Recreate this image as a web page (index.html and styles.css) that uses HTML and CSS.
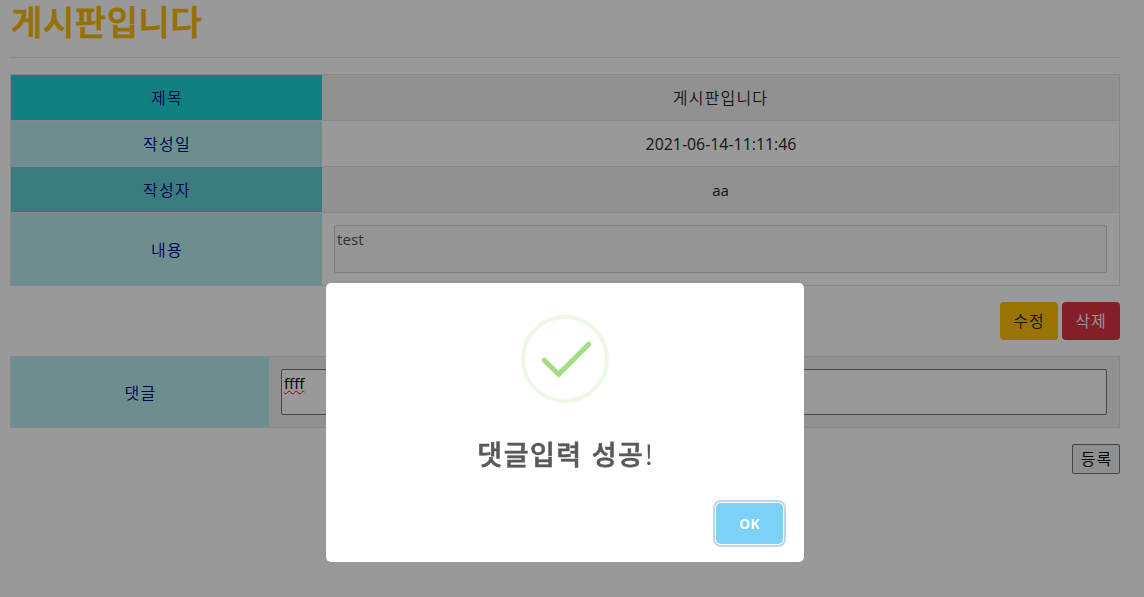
FILE: index.html
```html
<!DOCTYPE html>
<html lang="ko">
<head>
<meta charset="utf-8">
<title>게시판입니다</title>
<link rel="stylesheet" href="styles.css">
</head>
<body>
<main class="container">
  <h1 class="page-title">게시판입니다</h1>
  <table class="table post">
    <tr class="striped"><th class="head-title">제목</th><td>게시판입니다</td></tr>
    <tr><th class="head-light">작성일</th><td class="date">2021-06-14-11:11:46</td></tr>
    <tr class="striped"><th class="head-writer">작성자</th><td class="latin">aa</td></tr>
    <tr class="content-row"><th class="head-light">내용</th><td><div class="field readonly">test</div></td></tr>
  </table>
  <div class="actions">
    <button class="btn btn-warning">수정</button>
    <button class="btn btn-danger">삭제</button>
  </div>
  <table class="table comment">
    <tr class="striped"><th class="head-light">댓글</th><td><div class="field"><span class="misspelled">ffff</span></div></td></tr>
  </table>
  <div class="submit-row"><button class="submit">등록</button></div>
</main>
<div class="overlay">
  <div class="modal" role="dialog">
    <svg class="success" viewBox="0 0 88 88" width="88" height="88">
      <circle cx="44" cy="44" r="42" fill="none" stroke="#edf8e7" stroke-width="4"/>
      <path d="M23.2 45.2L37.6 59.3L67.8 29.2" fill="none" stroke="#a5dc86" stroke-width="5" stroke-linecap="round"/>
    </svg>
    <div class="modal-title">댓글입력 성공<span class="mark">!</span></div>
    <div class="modal-footer"><button class="ok">OK</button></div>
  </div>
</div>
</body>
</html>
```
FILE: styles.css
```css
* { box-sizing: border-box; }
body {
  margin: 0;
  background: #fff;
  color: #212529;
  font: 350 16px/22px "Open Sans", "Noto Sans CJK KR", sans-serif;
  overflow: hidden;
}
button { font-family: inherit; margin: 0; }
.container { width: 1110px; margin-left: 10px; }
.page-title {
  height: 58px;
  margin: 0 0 16px;
  padding-left: 1px;
  border-bottom: 1px solid #e5e5e5;
  color: #f8bc00;
  font-size: 34px;
  font-weight: 500;
  line-height: 45px;
  letter-spacing: .6px;
  -webkit-text-stroke: .8px #f8bc00;
}
.table {
  width: 100%;
  table-layout: fixed;
  border-collapse: separate;
  border-spacing: 0;
  border: solid #dee2e6;
  border-width: 0 1px 1px;
  margin: 0;
}
.table th, .table td {
  height: 46px;
  padding: 0 12px;
  border-top: 1px solid #dee2e6;
  text-align: center;
  vertical-align: middle;
  font-weight: 350;
  letter-spacing: 1.2px;
}
.table th { color: #000080; width: 311px; padding-left: 13px; }
.striped { background: #f2f2f2; }
.head-title { background: #1cd5d5; }
.head-light { background: #b4edee; }
.head-writer { background: #61cdd5; }
.table .date, .table .latin { letter-spacing: 0; font-weight: 400; }
.table .date { font-size: 15.9px; padding-left: 13px; }
.table .latin { font-size: 15px; }
.table .content-row th, .table .content-row td { height: 73px; }
.table .content-row th, .comment th { padding-top: 2px; }
.field {
  height: 48px;
  padding: 2px 2px;
  border: 1px solid #767676;
  border-radius: 2px;
  background: #fff;
  color: #000;
  font-size: 15.2px;
  font-weight: 400;
  line-height: 22px;
  letter-spacing: 0;
  text-align: left;
}
.readonly { background: #f8f8f8; border-color: #cfcfcf; color: #545454; }
.misspelled { text-decoration: underline wavy #f00 1px; text-underline-offset: 1px; }
.actions { display: flex; justify-content: flex-end; gap: 4px; padding: 16px 0; }
.btn {
  width: 58px;
  height: 38px;
  padding: 0 0 2px;
  border: 0;
  border-radius: 4px;
  font-size: 16px;
  font-weight: 350;
  letter-spacing: 1px;
}
.btn-warning { background: #ffc107; color: #212529; }
.btn-danger { background: #dc3545; color: #fff; }
.comment th { width: 258px; }
.comment th, .comment td { height: 71px; }
.comment .field { height: 46px; }
.submit-row { display: flex; justify-content: flex-end; padding-top: 16px; }
.submit {
  width: 48px;
  height: 30px;
  padding: 0 0 2px 1px;
  border: 1px solid #767676;
  border-radius: 2px;
  background: #efefef;
  color: #000;
  font-size: 16px;
  font-weight: 350;
  letter-spacing: 1px;
}
.overlay {
  position: fixed;
  inset: 0;
  background: rgba(0, 0, 0, .4);
}
.modal {
  display: flex;
  flex-direction: column;
  align-items: center;
  width: 478px;
  height: 279px;
  margin: 283px 0 0 326px;
  padding-top: 32px;
  border-radius: 5px;
  background: #fff;
}
.success { flex: none; }
.modal-title {
  margin-top: 31px;
  padding-left: 2px;
  color: #595959;
  font: 500 27px/40px "Noto Sans CJK KR", sans-serif;
  letter-spacing: 1.5px;
  -webkit-text-stroke: .6px #595959;
}
.mark { font-weight: 400; -webkit-text-stroke: 0; }
.modal-footer {
  display: flex;
  justify-content: flex-end;
  width: 100%;
  padding: 29px 21px 0 0;
}
.ok {
  width: 67px;
  height: 41px;
  padding: 0;
  border: 0;
  border-radius: 5px;
  background: #7cd1f9;
  box-shadow: 0 0 0 1px #fff, 0 0 0 3px rgba(43, 114, 165, .29);
  color: #fff;
  font-size: 14px;
  font-weight: 700;
}
```
